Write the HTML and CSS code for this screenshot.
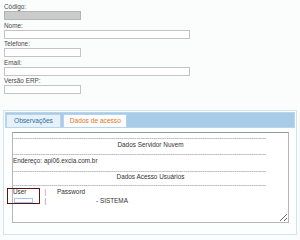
FILE: index.html
```html
<!DOCTYPE html>
<html lang="pt-BR">
<head>
<meta charset="utf-8">
<link rel="stylesheet" href="styles.css">
</head>
<body>
<div class="form">
  <div class="field"><label class="lbl">Código:</label><div class="inp short locked"></div></div>
  <div class="field"><label class="lbl">Nome:</label><div class="inp long"></div></div>
  <div class="field"><label class="lbl">Telefone:</label><div class="inp short"></div></div>
  <div class="field"><label class="lbl">Email:</label><div class="inp long"></div></div>
  <div class="field"><label class="lbl">Versão ERP:</label><div class="inp short"></div></div>
</div>
<div class="tabs">
  <ul class="tabbar">
    <li class="tab">Observações</li>
    <li class="tab active">Dados de acesso</li>
  </ul>
  <div class="tabpanel">
    <div class="editor">
      <div class="dash">-----------------------------------------------------------------------------------------------------------------------</div>
      <div class="row center">Dados Servidor Nuvem</div>
      <div class="dash">-----------------------------------------------------------------------------------------------------------------------</div>
      <div class="row">Endereço: api06.excia.com.br</div>
      <div class="dash">-----------------------------------------------------------------------------------------------------------------------</div>
      <div class="row center tight">Dados Acesso Usuários</div>
      <div class="dash after-tight">-----------------------------------------------------------------------------------------------------------------------</div>
      <div class="users">
        <div class="ucol">User</div>
        <div class="sep pink">|</div>
        <div class="pcol">Password</div>
        <div class="ucol second"><span class="mini"></span></div>
        <div class="sep second">|</div>
        <div class="pcol sys second">- SISTEMA</div>
      </div>
    </div>
    <div class="highlight"></div>
  </div>
</div>
</body>
</html>
```
FILE: styles.css
```css
html, body {
  margin: 0;
  background: #fbfcfc;
}
body {
  font-family: "Liberation Sans", Arial, sans-serif;
  font-size: 6.4px;
  color: #4a4a4a;
  padding: 3px 0 0 4px;
  width: 300px;
  height: 240px;
  box-sizing: border-box;
  position: relative;
}
.form {
  display: flex;
  flex-direction: column;
  gap: 1.5px;
}
.field {
  display: flex;
  flex-direction: column;
  align-items: flex-start;
}
.lbl {
  display: block;
  line-height: 8px;
  height: 8px;
}
.inp {
  height: 9px;
  box-sizing: border-box;
  border: 1px solid #c4c4c4;
  background: #fff;
}
.short { width: 77px; }
.long { width: 186px; }
.locked {
  background: #cbcbcb;
  border-color: #b4b4b4;
}
.tabs {
  margin: 16px 0 0 -1px;
  width: 294px;
  height: 125px;
  box-sizing: border-box;
  border: 1px solid #d3e3f1;
  background: #fdfefe;
  padding: 1px;
  position: relative;
}
.tabbar {
  list-style: none;
  margin: 0;
  padding: 2px 2px 0 0;
  height: 16px;
  box-sizing: border-box;
  background: #a9cbe6;
  border: 1px solid #b9d5ec;
  display: flex;
  gap: 2px;
  align-items: flex-end;
}
.tab {
  height: 13px;
  box-sizing: border-box;
  border: 1px solid #b8d4ea;
  border-bottom: 0;
  background: #e6f1fa;
  color: #2f6d9e;
  font-size: 6.6px;
  line-height: 12px;
  padding: 0 7px;
}
.tab.active {
  background: #fcfdfe;
  color: #e5761a;
  padding: 0 5px 0 6px;
}
.tabpanel {
  padding: 4px 6px 0 7px;
}
.editor {
  height: 91px;
  width: 277px;
  box-sizing: border-box;
  border: 1px solid #b5b5b5;
  border-top-color: #9a9a9a;
  background: #fff;
  padding: 1px 0 0 0;
  color: #333;
  resize: both;
  overflow: hidden;
}
.dash {
  white-space: nowrap;
  height: 7px;
  line-height: 7px;
  color: #8c8c8c;
}
.row + .dash {
  margin-top: 2.4px;
}
.row {
  height: 7px;
  line-height: 7px;
}
.row.tight {
  margin-top: -1px;
}
.dash.after-tight {
  margin-top: 1.6px;
}
.center {
  text-align: center;
}
.users {
  display: grid;
  grid-template-columns: 31.5px 12.5px auto;
  line-height: 7px;
}
.second {
  margin-top: 1.3px;
}
.sep { color: #777; }
.sep.pink { color: #c56aa3; }
.sys { padding-left: 39px; }
.mini {
  display: inline-block;
  width: 19px;
  height: 5px;
  box-sizing: border-box;
  border: 1px solid #a9c6e6;
  background: #fff;
  vertical-align: 0;
  margin-left: 1px;
}
.highlight {
  position: absolute;
  left: 3px;
  top: 77px;
  width: 33px;
  height: 16px;
  box-sizing: border-box;
  border: 1.5px solid #5a1515;
}
```
